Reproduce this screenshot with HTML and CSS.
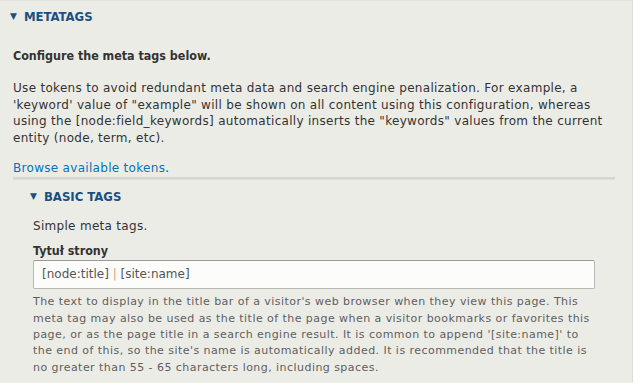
FILE: index.html
```html
<!DOCTYPE html>
<html>
<head>
<meta charset="utf-8">
<link rel="stylesheet" href="styles.css">
</head>
<body>
<div class="details">
  <div class="summary"><span class="tri">&#9660;</span>METATAGS</div>
  <div class="wrapper">
    <p class="intro">Configure the meta tags below.</p>
    <p class="para">Use tokens to avoid redundant meta data and search engine penalization. For example, a 'keyword' value of "example" will be shown on all content using this configuration, whereas using the [node:field_keywords] automatically inserts the "keywords" values from the current entity (node, term, etc).</p>
    <p class="para browse"><a href="#">Browse available tokens</a>.</p>
    <div class="inner">
      <div class="summary sub"><span class="tri">&#9660;</span>BASIC TAGS</div>
      <div class="inner-body">
        <p class="para simple">Simple meta tags.</p>
        <label class="label">Tytuł strony</label>
        <div class="input">[node:title] <span class="pipe">|</span> [site:name]</div>
        <p class="desc">The text to display in the title bar of a visitor's web browser when they view this page. This meta tag may also be used as the title of the page when a visitor bookmarks or favorites this page, or as the page title in a search engine result. It is common to append '[site:name]' to the end of this, so the site's name is automatically added. It is recommended that the title is no greater than 55 - 65 characters long, including spaces.</p>
      </div>
    </div>
  </div>
</div>
</body>
</html>
```

FILE: styles.css
```css
html, body {
  margin: 0;
  padding: 0;
}
body {
  background: #ecece7;
  font-family: "DejaVu Sans", Verdana, sans-serif;
  font-size: 12px;
  color: #333;
  width: 633px;
  height: 383px;
  overflow: hidden;
}
.details {
  border-top: 1px solid #e4e4df;
  border-right: 1px solid #dcdcd6;
  height: 382px;
  box-sizing: border-box;
}
.summary {
  color: #1a4f80;
  font-family: "DejaVu Sans Condensed", "DejaVu Sans", sans-serif;
  font-weight: bold;
  font-size: 13px;
  padding: 8px 0 0 10px;
  height: 15px;
  line-height: 15px;
  display: flex;
  align-items: center;
}
.tri {
  font-family: "DejaVu Sans", sans-serif;
  font-size: 9px;
  margin-right: 7px;
  color: #1a4f80;
}
.wrapper {
  padding: 0 17px 0 13px;
}
.intro {
  font-family: "DejaVu Sans Condensed", "DejaVu Sans", sans-serif;
  font-weight: bold;
  font-size: 12.4px;
  margin: 23px 0 0;
  line-height: 17px;
}
.para {
  margin: 0;
  line-height: 16.7px;
  letter-spacing: 0.3px;
  max-width: 600px;
}
.intro + .para {
  margin-top: 16px;
}
.browse {
  margin-top: 13px;
}
a {
  color: #0074bd;
  text-decoration: none;
}
.inner {
  margin-top: 0;
  border-top: 2px solid #d6d6d1;
  box-shadow: inset 0 1px 0 #dfdfda;
}
.summary.sub {
  padding: 10px 0 0 17px;
}
.inner-body {
  padding: 0 20px 0 20px;
}
.simple {
  margin-top: 14px;
}
.label {
  display: block;
  font-family: "DejaVu Sans Condensed", "DejaVu Sans", sans-serif;
  font-weight: bold;
  font-size: 12.4px;
  margin-top: 8px;
  line-height: 17px;
}
.input {
  margin-top: 1px;
  height: 29px;
  box-sizing: border-box;
  border: 1px solid #b8b8b4;
  border-top-color: #999;
  border-radius: 2px;
  background: #fcfcfa;
  padding: 0 0 0 8px;
  line-height: 27px;
  font-size: 12px;
  color: #555;
  width: 562px;
}
.pipe {
  color: #d4a67a;
}
.desc {
  margin: 5px 0 0;
  font-size: 11px;
  letter-spacing: 0.45px;
  line-height: 16.4px;
  color: #5e5e5e;
  width: 562px;
}
```
